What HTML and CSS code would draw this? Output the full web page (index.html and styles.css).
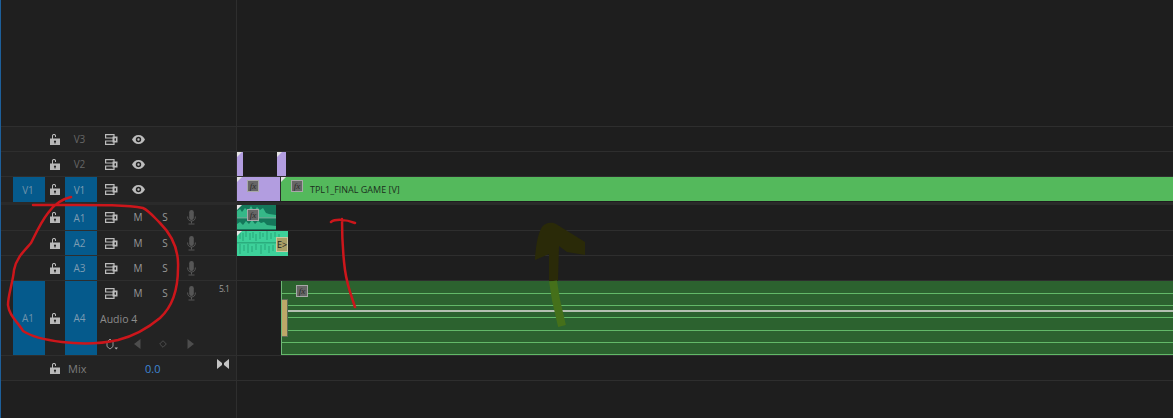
FILE: index.html
```html
<!DOCTYPE html>
<html lang="en">
<head>
    <meta charset="UTF-8">
    <title>Timeline</title>
    <link rel="stylesheet" href="styles.css">
</head>
<body>
    <svg class="defs" width="0" height="0">
        <symbol id="i-lock" viewBox="0 0 10 11">
            <path fill="currentColor" d="M2 1.600C2 .6 2.900 0 4 0s2 .6 2 1.600V3H5V1.700C5 1.200 4.600 1 4 1s-1 .2-1 .7V4.500H10V11H0V4.500H2ZM5 6.500a1 1 0 0 0-.5 1.900V9.500h1V8.400A1 1 0 0 0 5 6.500Z"/>
        </symbol>
        <symbol id="i-output" viewBox="0 0 13 11">
            <path fill="none" stroke="currentColor" stroke-width="1.200" d="M.6.600H9V4H.6ZM.6 7H9V10.400H.6Z"/>
            <path fill="currentColor" d="M7.500 2.500H12.500V8.500H7.500ZM9.500 4.300V6.700H11V4.300Z"/>
        </symbol>
        <symbol id="i-eye" viewBox="0 0 13 9">
            <path fill="currentColor" d="M6.500 0C9.500 0 11.700 2 13 4.500 11.700 7 9.500 9 6.500 9S1.300 7 0 4.500C1.300 2 3.500 0 6.500 0ZM6.500 1.800a2.700 2.700 0 1 0 0 5.400 2.700 2.700 0 0 0 0-5.400ZM6.500 3.300a1.200 1.200 0 1 1 0 2.400 1.200 1.200 0 0 1 0-2.400Z"/>
        </symbol>
        <symbol id="i-mic" viewBox="0 0 9 15">
            <rect x="2.200" y="0" width="4.600" height="10" rx="2.300" fill="currentColor"/>
            <path fill="none" stroke="currentColor" d="M.6 6.500C.6 9.500 2 11 4.500 11S8.400 9.500 8.400 6.500M4.500 11V13.500M1.500 14H7.500"/>
        </symbol>
    </svg>

    <div class="panel">
        <div class="track blank-top">
            <div class="head"></div>
            <div class="lane"></div>
        </div>

        <div class="track">
            <div class="head">
                <div class="src"></div>
                <div class="lock"><svg width="10" height="11"><use href="#i-lock"/></svg></div>
                <div class="tgt off">V3</div>
                <div class="btns">
                    <svg class="output" width="13" height="11"><use href="#i-output"/></svg>
                    <svg class="eye" width="13" height="9"><use href="#i-eye"/></svg>
                </div>
            </div>
            <div class="lane"></div>
        </div>

        <div class="track">
            <div class="head">
                <div class="src"></div>
                <div class="lock"><svg width="10" height="11"><use href="#i-lock"/></svg></div>
                <div class="tgt off">V2</div>
                <div class="btns">
                    <svg class="output" width="13" height="11"><use href="#i-output"/></svg>
                    <svg class="eye" width="13" height="9"><use href="#i-eye"/></svg>
                </div>
            </div>
            <div class="lane">
                <div class="clip purple v2-a"></div>
                <div class="clip purple v2-b"></div>
            </div>
        </div>

        <div class="track v1">
            <div class="head">
                <div class="src on">V1</div>
                <div class="lock"><svg width="10" height="11"><use href="#i-lock"/></svg></div>
                <div class="tgt on">V1</div>
                <div class="btns">
                    <svg class="output" width="13" height="11"><use href="#i-output"/></svg>
                    <svg class="eye" width="13" height="9"><use href="#i-eye"/></svg>
                </div>
            </div>
            <div class="lane">
                <div class="clip purple v1-a"><span class="fx">fx</span></div>
                <div class="clip green v1-b">
                    <span class="fx">fx</span>
                    <span class="clip-name">TPL1_FINAL GAME [V]</span>
                </div>
            </div>
        </div>

        <div class="divider"></div>

        <div class="track a1">
            <div class="head">
                <div class="src"></div>
                <div class="lock"><svg width="10" height="11"><use href="#i-lock"/></svg></div>
                <div class="tgt on">A1</div>
                <div class="btns">
                    <svg class="output" width="13" height="11"><use href="#i-output"/></svg>
                    <span class="letter m">M</span>
                    <span class="letter s">S</span>
                    <svg class="mic" width="9" height="15"><use href="#i-mic"/></svg>
                </div>
            </div>
            <div class="lane">
                <div class="clip teal a1-clip">
                    <svg class="wave" viewBox="0 0 39 25" preserveAspectRatio="none">
                        <path fill="#35b888" d="M0 12V6L3 4 5 7 8 3 11 6 14 1 17 6 20 2 23 5 26 3 29 8 32 9 39 10V12ZM0 24V19L3 17 6 20 9 16 12 19 15 15 18 19 21 16 24 18 27 17 30 20 39 21V24Z"/>
                        <path fill="#a9dfc8" d="M0 12.500H39V13.200H0Z"/>
                    </svg>
                    <span class="fx">fx</span>
                </div>
            </div>
        </div>

        <div class="track">
            <div class="head">
                <div class="src"></div>
                <div class="lock"><svg width="10" height="11"><use href="#i-lock"/></svg></div>
                <div class="tgt on">A2</div>
                <div class="btns">
                    <svg class="output" width="13" height="11"><use href="#i-output"/></svg>
                    <span class="letter m">M</span>
                    <span class="letter s">S</span>
                    <svg class="mic" width="9" height="15"><use href="#i-mic"/></svg>
                </div>
            </div>
            <div class="lane">
                <div class="clip mint a2-clip">
                    <svg class="wave" viewBox="0 0 51 25" preserveAspectRatio="none">
                        <path fill="none" stroke="#1a8a62" stroke-width=".6" d="M3 1V8M6 2V10M9 0V6M13 2V9M16 1V7M19 3V10M23 1V8M26 2V6M30 0V9M34 2V8M38 1V6M42 3V9M3 13V23M7 14V20M11 13V22M15 15V21M19 13V19M24 14V23M28 13V19M32 15V22M36 14V20M41 13V21M45 15V20"/>
                        <path fill="#1a8a62" d="M0 11.500H51V12.300H0Z"/>
                    </svg>
                    <span class="expr">E&gt;</span>
                </div>
            </div>
        </div>

        <div class="track">
            <div class="head">
                <div class="src"></div>
                <div class="lock"><svg width="10" height="11"><use href="#i-lock"/></svg></div>
                <div class="tgt on">A3</div>
                <div class="btns">
                    <svg class="output" width="13" height="11"><use href="#i-output"/></svg>
                    <span class="letter m">M</span>
                    <span class="letter s">S</span>
                    <svg class="mic" width="9" height="15"><use href="#i-mic"/></svg>
                </div>
            </div>
            <div class="lane"></div>
        </div>

        <div class="track a4">
            <div class="head">
                <div class="src on">A1</div>
                <div class="lock"><svg width="10" height="11"><use href="#i-lock"/></svg></div>
                <div class="tgt on">A4</div>
                <div class="a4-controls">
                    <div class="btns">
                        <svg class="output" width="13" height="11"><use href="#i-output"/></svg>
                        <span class="letter m">M</span>
                        <span class="letter s">S</span>
                        <svg class="mic" width="9" height="15"><use href="#i-mic"/></svg>
                        <span class="channels">5.1</span>
                    </div>
                    <div class="track-name">Audio 4</div>
                    <div class="keys">
                        <svg class="key-pen" width="13" height="12" viewBox="0 0 13 12">
                            <path fill="none" stroke="#b5b5b5" stroke-width=".8" d="M5 1 8 4V8.500L5 11 2 8.500V4Z"/>
                            <path fill="#b5b5b5" d="M9.500 9.500H13L11.200 11.500Z"/>
                        </svg>
                        <svg class="key-prev" width="7" height="10" viewBox="0 0 7 10"><path fill="#4d4d4d" d="M6.500 0V10L0 5Z"/></svg>
                        <svg class="key-add" width="8" height="8" viewBox="0 0 8 8"><path fill="none" stroke="#4d4d4d" d="M4 .7 7.300 4 4 7.300 .7 4Z"/></svg>
                        <svg class="key-next" width="7" height="10" viewBox="0 0 7 10"><path fill="#4d4d4d" d="M.5 0V10L7 5Z"/></svg>
                    </div>
                </div>
            </div>
            <div class="lane">
                <div class="clip dark-green a4-clip">
                    <div class="band tall"></div>
                    <div class="band"></div>
                    <div class="band thick"></div>
                    <div class="band short"></div>
                    <div class="band tall"></div>
                    <div class="band"></div>
                    <div class="band"></div>
                    <span class="fx">fx</span>
                    <span class="tan"></span>
                </div>
            </div>
        </div>

        <div class="track mix">
            <div class="head">
                <div class="src"></div>
                <div class="lock"><svg width="10" height="11"><use href="#i-lock"/></svg></div>
                <div class="mix-label">Mix</div>
                <div class="mix-value">0.0</div>
                <svg class="bowtie" width="12" height="10" viewBox="0 0 12 10">
                    <path fill="#c4c4c4" d="M0 0 5 4V6L0 10ZM12 0 7 4V6L12 10Z"/>
                </svg>
            </div>
            <div class="lane"></div>
        </div>

        <div class="track blank-bottom">
            <div class="head"></div>
            <div class="lane"></div>
        </div>

        <!-- пометки поверх скриншота -->
        <svg class="scribble" width="1173" height="418" viewBox="0 0 1173 418">
            <path class="olive-fill" d="M535 258C536 245 538 233 542 227 546 222 552 222 556 224L585 242 585 255 567 252 559 246 558 281 549 281 549 254 535 260Z"/>
            <path class="olive-light" d="M553 281 556 300 562 326"/>
            <path class="red" d="M71 197C62 199 55 203 48 213 41 222 36 233 31 243 25 250 16 258 14 270 13 282 8 295 8 305 9 316 18 322 23 331 32 337 46 340 62 342 78 344 100 344 118 340 134 336 148 328 160 318 172 307 178 290 178 268 179 250 172 235 160 223 153 216 148 210 143 208 125 204 90 205 33 205"/>
            <path class="red" d="M331 222C335 219 345 219 355 223M342 219C342 235 343 255 345 270 347 285 351 295 355 307"/>
        </svg>
    </div>
</body>
</html>
```

FILE: styles.css
```css
* {
    box-sizing: border-box;
}
body {
    margin: 0;
    background-color: #1e1e1e;
    font-family: "Open Sans", sans-serif;
    overflow: hidden;
}
.defs {
    position: absolute;
}
.panel {
    position: relative;
    width: 1173px;
    height: 418px;
    display: flex;
    flex-direction: column;
    border-left: 1px solid #1d5f9a;
}

/* дорожки */
.track {
    display: flex;
    height: 25px;
    border-bottom: 1px solid #2e2e2e;
}
.blank-top {
    height: 127px;
}
.blank-bottom {
    flex: 1;
    border-bottom: none;
}
.a1 {
    height: 26px;
}
.a4 {
    height: 75px;
}
.v1 {
    border-bottom: none;
}
.divider {
    height: 3px;
    background-color: #2a2a2a;
}
.head {
    width: 236px;
    flex-shrink: 0;
    display: flex;
    background-color: #232323;
    border-right: 1px solid #2e2e2e;
    color: #b9b9b9;
}
.blank-top .head,
.blank-bottom .head {
    background-color: #1f1f1f;
}
.lane {
    flex: 1;
    display: flex;
    background-color: #1e1e1e;
}
.src {
    width: 32px;
    margin-left: 12px;
    padding-right: 2px;
    display: flex;
    align-items: center;
    justify-content: center;
    font-size: 10px;
    color: #6f93ab;
}
.src.on,
.tgt.on {
    background-color: #055a8c;
}
.lock {
    width: 20px;
    display: flex;
    align-items: center;
    justify-content: center;
}
.tgt {
    width: 32px;
    padding-right: 3px;
    display: flex;
    align-items: center;
    justify-content: center;
    font-size: 10px;
    color: #7c9cb2;
}
.tgt.off {
    color: #666;
}
.btns {
    display: flex;
    align-items: center;
    height: 24px;
    padding-left: 8px;
}
.output {
    color: #bcbcbc;
}
.eye {
    margin-left: 14px;
    color: #bcbcbc;
}
.letter {
    font-size: 10px;
    color: #989898;
    text-align: center;
}
.m {
    width: 12px;
    margin-left: 14px;
}
.s {
    width: 8px;
    margin-left: 17px;
}
.mic {
    margin-left: 18px;
    color: #565656;
}
.a4-controls {
    flex: 1;
    display: flex;
    flex-direction: column;
}
.channels {
    font-size: 8.500px;
    letter-spacing: -.5px;
    color: #9a9a9a;
    margin-left: 23px;
    margin-top: -9px;
}
.track-name {
    font-size: 10.500px;
    color: #8c8c8c;
    padding-left: 3px;
    margin-top: 7px;
    height: 16px;
}
.keys {
    display: flex;
    align-items: center;
    margin-top: 10px;
    padding-left: 8px;
}
.key-prev {
    margin-left: 16px;
}
.key-add {
    margin-left: 18px;
}
.key-next {
    margin-left: 20px;
}
.mix .head {
    align-items: center;
}
.mix .lock {
    height: 100%;
}
.mix-label {
    width: 32px;
    padding-left: 3px;
    font-size: 11px;
    color: #7c7c7c;
}
.mix-value {
    width: 120px;
    padding-left: 48px;
    font-size: 11px;
    color: #3f86d6;
    flex: none;
}
.bowtie {
    margin-top: -9px;
}

/* клипы */
.clip {
    position: relative;
    height: 24px;
}
.clip::before {
    content: "";
    position: absolute;
    top: 0;
    left: 0;
    border-top: 5px solid #e4e4e4;
    border-right: 5px solid transparent;
    z-index: 1;
}
.purple {
    background-color: #b29de0;
}
.green {
    background-color: #54b95c;
}
.v2-a {
    width: 6px;
}
.v2-b {
    width: 9px;
    margin-left: 34px;
}
.v1-a {
    width: 44px;
    border-right: 1px solid #2a2a2a;
}
.v1-b {
    flex: 1;
    display: flex;
    align-items: center;
}
.fx {
    position: absolute;
    top: 3px;
    left: 10px;
    width: 12px;
    height: 12px;
    background-color: #666;
    border: 1px solid #a8a8a8;
    color: #2a2a2a;
    font-family: "Liberation Serif", serif;
    font-style: italic;
    font-size: 9px;
    line-height: 10px;
    text-align: center;
}
.clip-name {
    margin-left: 29px;
    font-size: 9px;
    color: #1b2f1d;
}
.teal {
    background-color: #14775a;
}
.mint {
    background-color: #3dd19a;
}
.a1-clip {
    width: 39px;
    height: 25px;
}
.a2-clip {
    width: 51px;
    height: 25px;
}
.a1-clip .fx {
    top: 4px;
}
.wave {
    display: block;
    width: 100%;
    height: 100%;
}
.expr {
    position: absolute;
    right: 0;
    top: 6px;
    width: 12px;
    height: 15px;
    background-color: #a89f66;
    border: 1px solid #c9c6a0;
    color: #1d1d1d;
    font-size: 9px;
    line-height: 13px;
}
.dark-green {
    background-color: #2c622f;
}
.a4-clip {
    flex: 1;
    height: 74px;
    margin-left: 44px;
    border-left: 1px solid #6fb877;
    display: flex;
    flex-direction: column;
}
.a4-clip::before {
    display: none;
}
.band {
    height: 12px;
    border-bottom: 1px solid #62b968;
}
.band.tall {
    height: 13px;
}
.band.short {
    height: 6px;
}
.band.thick {
    height: 6px;
    border-bottom: 2px solid #b4bfb1;
}
.a4-clip .fx {
    top: 4px;
    left: 14px;
}
.tan {
    position: absolute;
    left: 0;
    top: 18px;
    width: 6px;
    height: 38px;
    background-color: #bda868;
    border: 1px solid #5f6b58;
    border-left: none;
}

/* пометки */
.scribble {
    position: absolute;
    top: 0;
    left: -1px;
    pointer-events: none;
}
.red {
    fill: none;
    stroke: #cc161b;
    stroke-width: 2.500;
    stroke-linecap: round;
    stroke-linejoin: round;
}
.olive-fill {
    fill: #2a2a08;
}
.olive-light {
    fill: none;
    stroke: #45701a;
    stroke-width: 8;
}
```
